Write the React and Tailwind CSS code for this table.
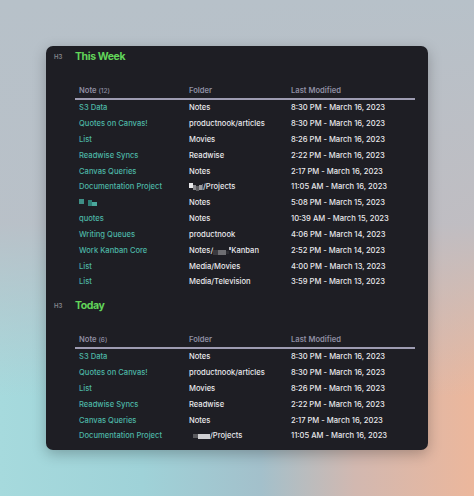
import React from "react";

const week = [
  ["S3 Data", "Notes", "8:30 PM - March 16, 2023"],
  ["Quotes on Canvas!", "productnook/articles", "8:30 PM - March 16, 2023"],
  ["List", "Movies", "8:26 PM - March 16, 2023"],
  ["Readwise Syncs", "Readwise", "2:22 PM - March 16, 2023"],
  ["Canvas Queries", "Notes", "2:17 PM - March 16, 2023"],
  ["Documentation Project", "PROJ1", "11:05 AM - March 16, 2023"],
  ["REDACT", "Notes", "5:08 PM - March 15, 2023"],
  ["quotes", "Notes", "10:39 AM - March 15, 2023"],
  ["Writing Queues", "productnook", "4:06 PM - March 14, 2023"],
  ["Work Kanban Core", "KANBAN", "2:52 PM - March 14, 2023"],
  ["List", "Media/Movies", "4:00 PM - March 13, 2023"],
  ["List", "Media/Television", "3:59 PM - March 13, 2023"],
];

const today = [
  ["S3 Data", "Notes", "8:30 PM - March 16, 2023"],
  ["Quotes on Canvas!", "productnook/articles", "8:30 PM - March 16, 2023"],
  ["List", "Movies", "8:26 PM - March 16, 2023"],
  ["Readwise Syncs", "Readwise", "2:22 PM - March 16, 2023"],
  ["Canvas Queries", "Notes", "2:17 PM - March 16, 2023"],
  ["Documentation Project", "PROJ2", "11:05 AM - March 16, 2023"],
];

function Folder({ v }) {
  if (v === "PROJ1")
    return (
      <span className="flex items-center">
        <span className="flex items-center">
          <span className="w-[4px] h-[5px] bg-[#e8e8ea] -mt-[3px]" />
          <span className="w-[3px] h-[5px] bg-[#8a8a8e]" />
          <span className="w-[3px] h-[5px] bg-[#5c5c60] mt-[3px]" />
          <span className="w-[3px] h-[5px] bg-[#9a9a9e]" />
          <span className="w-[1px] h-[6px] bg-[#6a6a6e]" />
        </span>
        <span>/Projects</span>
      </span>
    );
  if (v === "PROJ2")
    return (
      <span className="flex items-center pl-[4px]">
        <span className="w-[5px] h-[4px] bg-[#5a5a5e]" />
        <span className="w-[12px] h-[5px] bg-[#cfcfd2]" />
        <span>/Projects</span>
      </span>
    );
  if (v === "KANBAN")
    return (
      <span className="flex items-center">
        <span>Notes/</span>
        <span className="w-[5px] h-[5px] bg-[#3a3a40] mt-[3px]" />
        <span className="w-[8px] h-[5px] bg-[#6e6e72] mt-[3px]" />
        <span className="w-[3px] h-[3px] bg-[#2e2e33] mt-[3px]" />
        <span className="w-[2px] h-[3px] bg-[#bcbcc0] -mt-[4px]" />
        <span>Kanban</span>
      </span>
    );
  return <span>{v}</span>;
}

function Note({ v }) {
  if (v === "REDACT")
    return (
      <span className="flex items-center">
        <span className="w-[5px] h-[5px] bg-[#3f8f86] -mt-[3px]" />
        <span className="w-[4px] h-[4px] bg-[#1e1e24]" />
        <span className="w-[4px] h-[6px] bg-[#2f7f77]" />
        <span className="w-[5px] h-[4px] bg-[#4aa89c] mt-[2px]" />
      </span>
    );
  return <span>{v}</span>;
}

function Section({ title, count, rows }) {
  return (
    <div>
      <div className="flex items-center h-[16px]">
        <div className="w-[29px] pl-[8px] text-[6px] font-semibold text-[#85858c] leading-none">H3</div>
        <div className="text-[10.5px] font-bold text-[#62d55a] leading-none tracking-[-0.4px]">{title}</div>
      </div>
      <div className="ml-[29px] mr-[13px] mt-[18px]">
        <div className="flex h-[17px] items-center border-b-2 border-[#9e9cb2] text-[#8f8ea3] font-semibold">
          <div className="w-[110px] pl-[4px]">
            Note <span className="text-[6.5px] font-medium">({count})</span>
          </div>
          <div className="w-[102px] pl-[4px]">Folder</div>
          <div className="flex-1 pl-[4px]">Last Modified</div>
        </div>
        {rows.map((r, i) => (
          <div key={i} className="flex h-[15.85px] items-center">
            <div className="w-[110px] pl-[4px] text-[#4db6a6] font-medium">
              <Note v={r[0]} />
            </div>
            <div className="w-[102px] pl-[4px] text-[#e9e9ec] font-medium">
              <Folder v={r[1]} />
            </div>
            <div className="flex-1 pl-[4px] text-[#e9e9ec] font-medium">{r[2]}</div>
          </div>
        ))}
      </div>
    </div>
  );
}

export default function App() {
  return (
    <div
      className="w-[474px] h-[496px] overflow-hidden pt-[46px] pl-[46px] bg-[linear-gradient(180deg,rgba(183,193,201,1)_0%,rgba(187,190,198,0.9)_45%,rgba(187,190,198,0)_80%),linear-gradient(90deg,#a6dadd_0%,#9fd2d8_30%,#a3c0cb_55%,#d2b8b0_75%,#ecb79c_100%)]"
      style={{ fontFamily: "Inter, 'Noto Sans', sans-serif" }}
    >
      <div className="w-[382px] h-[404px] rounded-[7px] bg-[#1e1e24] pt-[3px] text-[7.6px] leading-none shadow-[0_4px_14px_rgba(0,0,0,0.25)]">
        <Section title="This Week" count={12} rows={week} />
        <div className="h-[8px]" />
        <Section title="Today" count={6} rows={today} />
      </div>
    </div>
  );
}
